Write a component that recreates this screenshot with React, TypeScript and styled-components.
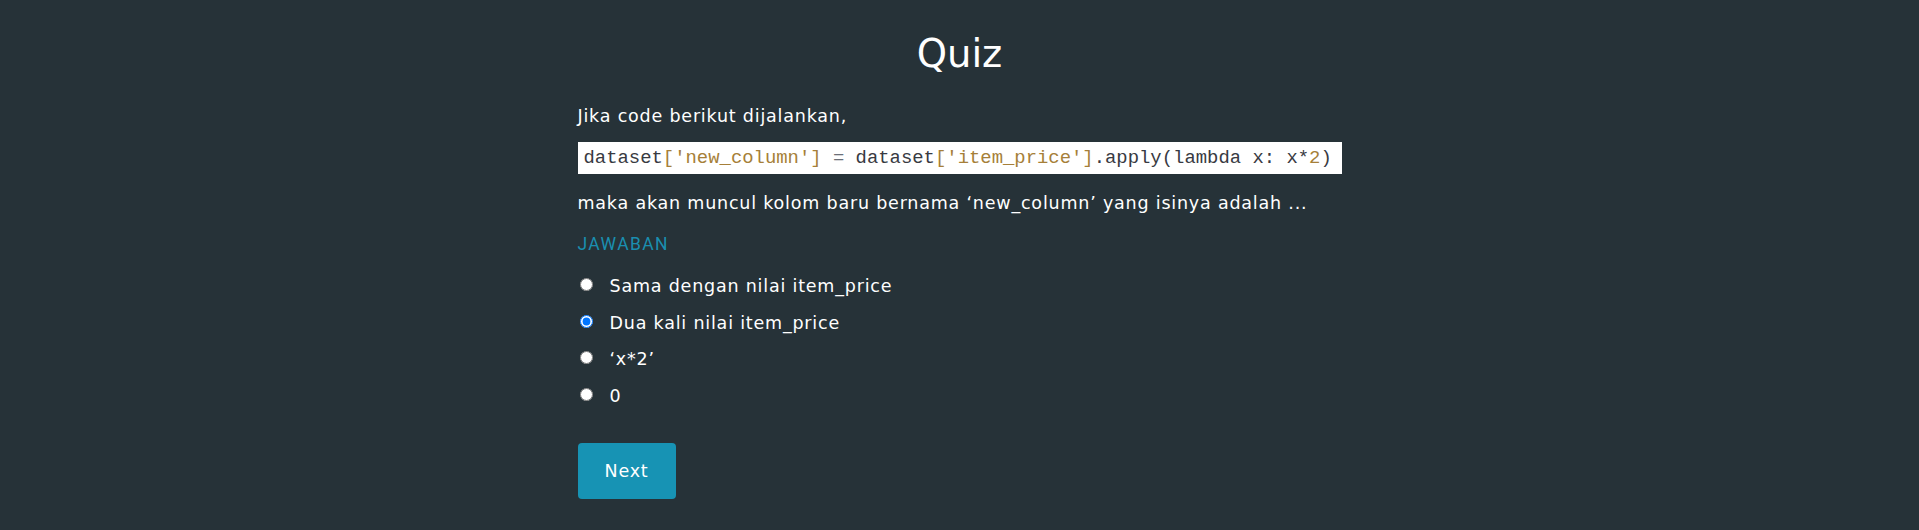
import React, { useState } from "react";
import styled, { createGlobalStyle } from "styled-components";

const GlobalStyle = createGlobalStyle`
  html, body {
    margin: 0;
    padding: 0;
    background: #263238;
  }
  body {
    font-family: "DejaVu Sans", "Open Sans", sans-serif;
    color: #ffffff;
  }
`;

const Page = styled.main`
  min-height: 530px;
  background: #263238;
  padding: 29px 0 0;
  box-sizing: border-box;
`;

const Container = styled.section`
  width: 764px;
  margin: 0 auto;
  display: flex;
  flex-direction: column;
  align-items: flex-start;
`;

const Title = styled.h1`
  align-self: stretch;
  margin: 0;
  text-align: center;
  font-size: 38.5px;
  font-weight: 500;
  line-height: 50px;
  color: #ffffff;
`;

const Paragraph = styled.p<{ $top?: number }>`
  margin: ${(p) => p.$top ?? 0}px 0 0;
  font-size: 17.5px;
  letter-spacing: 0.8px;
  line-height: 24px;
  color: #ffffff;
`;

const CodeBox = styled.code`
  display: block;
  align-self: stretch;
  margin-top: 14px;
  padding: 0 9px 0 6px;
  background: #ffffff;
  color: #383a42;
  font-family: "Liberation Mono", "DejaVu Sans Mono", monospace;
  font-size: 18.9px;
  line-height: 32px;
  white-space: pre;
`;

const Str = styled.span`
  color: #a67f39;
`;

const Op = styled.span`
  color: #6b6f78;
`;

const SectionLabel = styled.h2`
  margin: 17px 0 0;
  font-family: Roboto, "Liberation Sans", sans-serif;
  font-size: 17.5px;
  font-weight: 400;
  line-height: 24px;
  letter-spacing: 1.4px;
  color: #1a8fb0;
`;

const Options = styled.div`
  margin-top: 18px;
  display: flex;
  flex-direction: column;
  gap: 12.7px;
`;

const OptionRow = styled.label`
  display: flex;
  align-items: center;
  gap: 17px;
  font-size: 17.5px;
  letter-spacing: 0.8px;
  line-height: 24px;
  color: #ffffff;
  cursor: pointer;
`;

const Radio = styled.input`
  width: 13px;
  height: 13px;
  margin: 0 0 3px 2px;
`;

const NextButton = styled.button`
  margin-top: 35px;
  width: 98px;
  height: 56px;
  border: none;
  border-radius: 4px;
  background: #1793b4;
  color: #ffffff;
  font-family: "DejaVu Sans", "Open Sans", sans-serif;
  font-size: 17.5px;
  letter-spacing: 0.8px;
  cursor: pointer;
`;

const options = [
  "Sama dengan nilai item_price",
  "Dua kali nilai item_price",
  "‘x*2’",
  "0",
];

export default function App() {
  const [selected, setSelected] = useState(1);
  return (
    <>
      <GlobalStyle />
      <Page>
        <Container>
          <Title>Quiz</Title>
          <Paragraph $top={25}>Jika code berikut dijalankan,</Paragraph>
          <CodeBox>
            dataset<Str>['new_column']</Str> <Op>=</Op> dataset
            <Str>['item_price']</Str>.apply(lambda x: x*<Str>2</Str>)
          </CodeBox>
          <Paragraph $top={17}>
            maka akan muncul kolom baru bernama ‘new_column’ yang isinya adalah ...
          </Paragraph>
          <SectionLabel>JAWABAN</SectionLabel>
          <Options>
            {options.map((o, i) => (
              <OptionRow key={i}>
                <Radio
                  type="radio"
                  name="answer"
                  checked={selected === i}
                  onChange={() => setSelected(i)}
                />
                {o}
              </OptionRow>
            ))}
          </Options>
          <NextButton>Next</NextButton>
        </Container>
      </Page>
    </>
  );
}
